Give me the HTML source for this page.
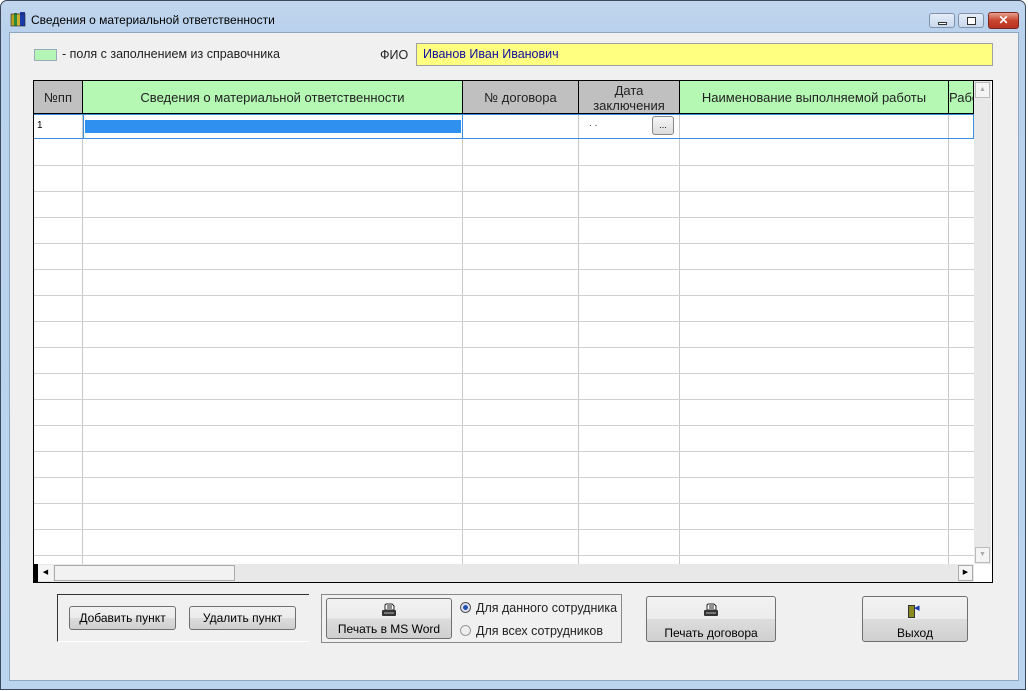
<!DOCTYPE html>
<html><head><meta charset="utf-8"><style>
*{margin:0;padding:0;box-sizing:border-box}
body{width:1028px;height:691px;background:#fff;font-family:"Liberation Sans",sans-serif;font-size:12.5px;position:relative;overflow:hidden}
.a{position:absolute}
.frame{left:0;top:0;width:1026px;height:690px;border:1px solid #3a4a5a;border-radius:7px 7px 0 0;background:linear-gradient(#c2d6ee,#b9d1ec 30px,#bcd5ee);}
.client{left:9px;top:32px;width:1010px;height:649px;background:#f0f0f0;border:1px solid #8fa6c0}
.btn{position:absolute;border:1px solid #707070;border-radius:3px;background:linear-gradient(#f2f2f2 0,#ebebeb 50%,#dddddd 50%,#cfcfcf);text-align:center;color:#000;font-size:12px}
.hl{position:absolute;height:1px;background:#d0d0d0;left:34px;width:940px}
.vl{position:absolute;width:1px;background:#c8c8c8;top:114px;height:450px}
.hd{position:absolute;top:81px;height:33px;border-right:1px solid #000;display:flex;align-items:center;justify-content:center;text-align:center;font-size:13px;line-height:15px;color:#222}
</style></head><body>
<div class="a frame"></div>
<svg class="a" style="left:10px;top:11px" width="18" height="16"><rect x="1" y="3" width="3" height="12" fill="#b8a020"/><rect x="4" y="2" width="3" height="13" fill="#2a8a3a"/><rect x="7" y="3" width="3" height="12" fill="#d0b030"/><rect x="10" y="1" width="5" height="14" fill="#1a3aa8"/><rect x="1" y="3" width="14" height="12" fill="none" stroke="#222" stroke-width=".6"/></svg>
<div class="a" style="left:31px;top:13px;font-size:12px;color:#000">Сведения о материальной ответственности</div>
<div class="a" style="left:929px;top:13px;width:26px;height:15px;border:1px solid #7f93ad;border-radius:3px;background:linear-gradient(#e4edf8,#c8d8ec)"><div class="a" style="left:8px;top:8px;width:9px;height:3px;border:1px solid #333;background:#fff"></div></div>
<div class="a" style="left:958px;top:13px;width:26px;height:15px;border:1px solid #7f93ad;border-radius:3px;background:linear-gradient(#e4edf8,#c8d8ec)"><div class="a" style="left:8px;top:3px;width:9px;height:8px;border:1px solid #333;background:#fff"></div></div>
<div class="a" style="left:988px;top:12px;width:31px;height:17px;border:1px solid #7a2a20;border-radius:3px;background:linear-gradient(#e8a090,#c8452e 50%,#b83020);color:#fff;font-weight:bold;text-align:center;font-size:12px;line-height:15px">✕</div>
<div class="a client"></div>
<div class="a" style="left:34px;top:49px;width:23px;height:12px;background:#b4f4b4;border:1px solid #9ab"></div>
<div class="a" style="left:62px;top:47px;color:#222">- поля с заполнением из справочника</div>
<div class="a" style="left:380px;top:48px;color:#222">ФИО</div>
<div class="a" style="left:416px;top:43px;width:577px;height:23px;background:#ffff80;border:1px solid #a0a0a0;color:#1010a0;padding:3px 6px">Иванов Иван Иванович</div>
<!-- grid -->
<div class="a" style="left:33px;top:80px;width:960px;height:503px;border:1px solid #000;background:#fff"></div>
<div class="hd" style="left:34px;width:49px;background:#c0c0c0">№пп</div>
<div class="hd" style="left:83px;width:380px;background:#b4f8b4">Сведения о материальной ответственности</div>
<div class="hd" style="left:463px;width:116px;background:#c0c0c0">№ договора</div>
<div class="hd" style="left:579px;width:101px;background:#c0c0c0">Дата<br>заключения</div>
<div class="hd" style="left:680px;width:269px;background:#b4f8b4">Наименование выполняемой работы</div>
<div class="hd" style="left:949px;width:25px;background:#b4f8b4;justify-content:flex-start;overflow:hidden">Рабо</div>
<div class="a" style="left:34px;top:113px;width:940px;height:1px;background:#000"></div>
<div class="vl" style="left:82px"></div><div class="vl" style="left:462px"></div><div class="vl" style="left:578px"></div><div class="vl" style="left:679px"></div><div class="vl" style="left:948px"></div>
<div class="hl" style="top:165px"></div><div class="hl" style="top:191px"></div><div class="hl" style="top:217px"></div><div class="hl" style="top:243px"></div><div class="hl" style="top:269px"></div><div class="hl" style="top:295px"></div><div class="hl" style="top:321px"></div><div class="hl" style="top:347px"></div><div class="hl" style="top:373px"></div><div class="hl" style="top:399px"></div><div class="hl" style="top:425px"></div><div class="hl" style="top:451px"></div><div class="hl" style="top:477px"></div><div class="hl" style="top:503px"></div><div class="hl" style="top:529px"></div><div class="hl" style="top:555px"></div>
<div class="a" style="left:34px;top:114px;width:940px;height:25px;border:1px solid #3c8ee0;border-left:none"></div>
<div class="a" style="left:37px;top:120px;font-size:10px">1</div>
<div class="a" style="left:83px;top:114px;width:380px;height:25px;border:1px solid #3c8ee0;background:#fff"><div class="a" style="left:1px;top:5px;width:376px;height:13px;background:#3090f0"></div></div>
<div class="a" style="left:589px;top:118px;font-size:10px;color:#444">. .</div>
<div class="a" style="left:652px;top:116px;width:22px;height:19px;border:1px solid #888;border-radius:3px;background:linear-gradient(#f6f6f6,#dcdcdc);font-size:9px;text-align:center;line-height:16px">...</div>
<!-- scrollbars -->
<div class="a" style="left:974px;top:81px;width:17px;height:483px;background:#e8e8e8"><div class="a" style="left:1px;top:1px;width:15px;height:16px;border:1px solid #bbb;background:#f4f4f4;color:#aaa;font-size:7px;text-align:center;line-height:14px">▲</div><div class="a" style="left:1px;bottom:1px;width:15px;height:16px;border:1px solid #bbb;background:#f4f4f4;color:#aaa;font-size:7px;text-align:center;line-height:14px">▼</div></div>
<div class="a" style="left:34px;top:564px;width:940px;height:18px;background:#e8e8e8"><div class="a" style="left:0;top:0;width:4px;height:18px;background:#000"></div><div class="a" style="left:4px;top:1px;width:15px;height:16px;background:#f4f4f4;font-size:7px;text-align:center;line-height:16px">◀</div><div class="a" style="left:20px;top:1px;width:181px;height:16px;border:1px solid #aaa;background:#f2f2f2"></div><div class="a" style="right:1px;top:1px;width:15px;height:16px;border:1px solid #aaa;background:#f4f4f4;font-size:7px;text-align:center;line-height:14px">▶</div></div>
<!-- bottom -->
<div class="a" style="left:57px;top:594px;width:252px;height:48px;border-top:1px solid #333;border-left:1px solid #333;border-bottom:1px solid #fff"></div>
<div class="btn" style="left:69px;top:606px;width:107px;height:24px;line-height:22px">Добавить пункт</div>
<div class="btn" style="left:189px;top:606px;width:107px;height:24px;line-height:22px">Удалить пункт</div>
<div class="a" style="left:321px;top:594px;width:301px;height:49px;border:1px solid #888"></div>
<div class="btn" style="left:326px;top:598px;width:126px;height:41px;padding-top:23px">Печать в MS Word</div>
<svg class="a" style="left:381px;top:603px" width="16" height="15"><path d="M5 1h6l2 2v4H4V2z" fill="#fff" stroke="#222"/><path d="M6 3h5M6 5h5" stroke="#222"/><rect x="1" y="7" width="14" height="6" rx="1" fill="#333"/><rect x="3" y="9" width="10" height="2" fill="#777"/></svg>
<div class="a" style="left:460px;top:602px;width:11px;height:11px;border-radius:50%;border:1px solid #555;background:radial-gradient(#1a50b0 35%,#dde 40%)"></div>
<div class="a" style="left:476px;top:601px;color:#222">Для данного сотрудника</div>
<div class="a" style="left:460px;top:625px;width:11px;height:11px;border-radius:50%;border:1px solid #999;background:#eee"></div>
<div class="a" style="left:476px;top:624px;color:#222">Для всех сотрудников</div>
<div class="btn" style="left:646px;top:596px;width:130px;height:46px;padding-top:29px">Печать договора</div>
<svg class="a" style="left:703px;top:603px" width="16" height="15"><path d="M5 1h6l2 2v4H4V2z" fill="#fff" stroke="#222"/><path d="M6 3h5M6 5h5" stroke="#222"/><rect x="1" y="7" width="14" height="6" rx="1" fill="#333"/><rect x="3" y="9" width="10" height="2" fill="#777"/></svg>
<div class="btn" style="left:862px;top:596px;width:106px;height:46px;padding-top:29px">Выход</div>
<div class="a" style="left:908px;top:605px;width:7px;height:13px;background:#8a8a20;border:1px solid #333"></div>
<div class="a" style="left:914px;top:601px;color:#1a3ab0;font-size:11px">◂</div>
</body></html>
